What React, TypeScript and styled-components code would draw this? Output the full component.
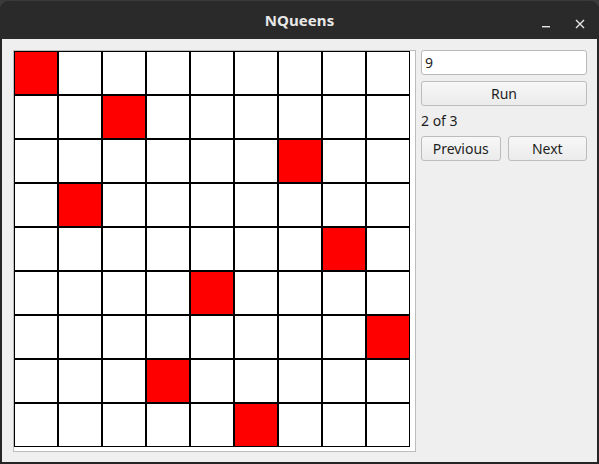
import styled, { createGlobalStyle } from "styled-components";

const N = 9;
const solution = [0, 2, 6, 1, 7, 4, 8, 3, 5];

const GlobalStyle = createGlobalStyle`
  html, body {
    margin: 0;
    padding: 0;
    background: #3b3b3b;
  }
  body {
    font-family: "Noto Sans", "Open Sans", sans-serif;
    font-size: 14px;
    color: #1e1e1e;
  }
`;

const App: React.FC = () => {
  return (
    <>
      <GlobalStyle />
      <Window>
        <TitleBar>
          <Title>NQueens</Title>
          <Controls>
            <CtrlBtn aria-label="minimize">
              <svg width="10" height="10" viewBox="0 0 10 10">
                <rect x="1" y="7" width="8" height="1.4" fill="#e6e6e6" />
              </svg>
            </CtrlBtn>
            <CtrlBtn aria-label="close">
              <svg width="10" height="10" viewBox="0 0 10 10">
                <path
                  d="M1 1 L9 9 M9 1 L1 9"
                  stroke="#e6e6e6"
                  strokeWidth="1.4"
                />
              </svg>
            </CtrlBtn>
          </Controls>
        </TitleBar>
        <Body>
          <BoardFrame>
            <Board>
              {Array.from({ length: N * N }).map((_, i) => {
                const row = Math.floor(i / N);
                const col = i % N;
                return <Cell key={i} $queen={solution[row] === col} />;
              })}
            </Board>
          </BoardFrame>
          <Panel>
            <SizeInput defaultValue="9" />
            <Button>Run</Button>
            <Status>2 of 3</Status>
            <NavRow>
              <Button>Previous</Button>
              <Button>Next</Button>
            </NavRow>
          </Panel>
        </Body>
      </Window>
    </>
  );
};

const Window = styled.div`
  width: 599px;
  height: 463px;
  margin-top: 1px;
  box-sizing: border-box;
  display: flex;
  flex-direction: column;
  background: #252525;
  border-radius: 9px 9px 0 0;
  padding: 0 2px 2px 2px;
  overflow: hidden;
`;

const TitleBar = styled.div`
  height: 38px;
  flex: none;
  position: relative;
  display: flex;
  align-items: center;
  justify-content: center;
  background: #2a2a2a;
  margin: 0 -2px;
`;

const Title = styled.span`
  color: #e8e8e8;
  font-weight: bold;
  font-size: 15px;
  letter-spacing: 0.1px;
`;

const Controls = styled.div`
  position: absolute;
  right: 10px;
  top: 17px;
  display: flex;
  gap: 16px;
`;

const CtrlBtn = styled.div`
  width: 18px;
  height: 12px;
  display: flex;
  align-items: center;
  justify-content: center;
`;

const Body = styled.div`
  flex: 1;
  display: flex;
  align-items: flex-start;
  gap: 5px;
  background: #efefef;
  padding: 11px 10px 0 11px;
`;

const BoardFrame = styled.div`
  width: 403px;
  height: 402px;
  box-sizing: border-box;
  border: 1px solid #bcbcbc;
  background: #ffffff;
  flex: none;
`;

const Board = styled.div`
  display: grid;
  grid-template-columns: repeat(${N}, 44px);
  grid-template-rows: repeat(${N}, 44px);
`;

const Cell = styled.div<{ $queen: boolean }>`
  box-sizing: border-box;
  border: 1px solid #000;
  background: ${(p) => (p.$queen ? "#ff0000" : "#ffffff")};
`;

const Panel = styled.div`
  width: 166px;
  display: flex;
  flex-direction: column;
`;

const SizeInput = styled.input`
  box-sizing: border-box;
  height: 25px;
  width: 100%;
  margin: 0;
  padding: 0 3px;
  border: 1px solid #b9b9b9;
  border-radius: 3px;
  background: #fff;
  font-family: inherit;
  font-size: 14px;
  color: #1e1e1e;
  outline: none;
  & + button {
    margin-top: 6px;
  }
`;

const Button = styled.button`
  box-sizing: border-box;
  height: 25px;
  width: 100%;
  padding: 0;
  border: 1px solid #bcbcbc;
  border-radius: 3px;
  background: linear-gradient(#f7f7f7, #ebebeb);
  font-family: inherit;
  font-size: 14px;
  color: #1e1e1e;
`;

const Status = styled.div`
  height: 30px;
  display: flex;
  align-items: center;
  line-height: 1;
`;

const NavRow = styled.div`
  display: flex;
  gap: 7px;
  & > button {
    flex: 1;
  }
`;

export default App;
